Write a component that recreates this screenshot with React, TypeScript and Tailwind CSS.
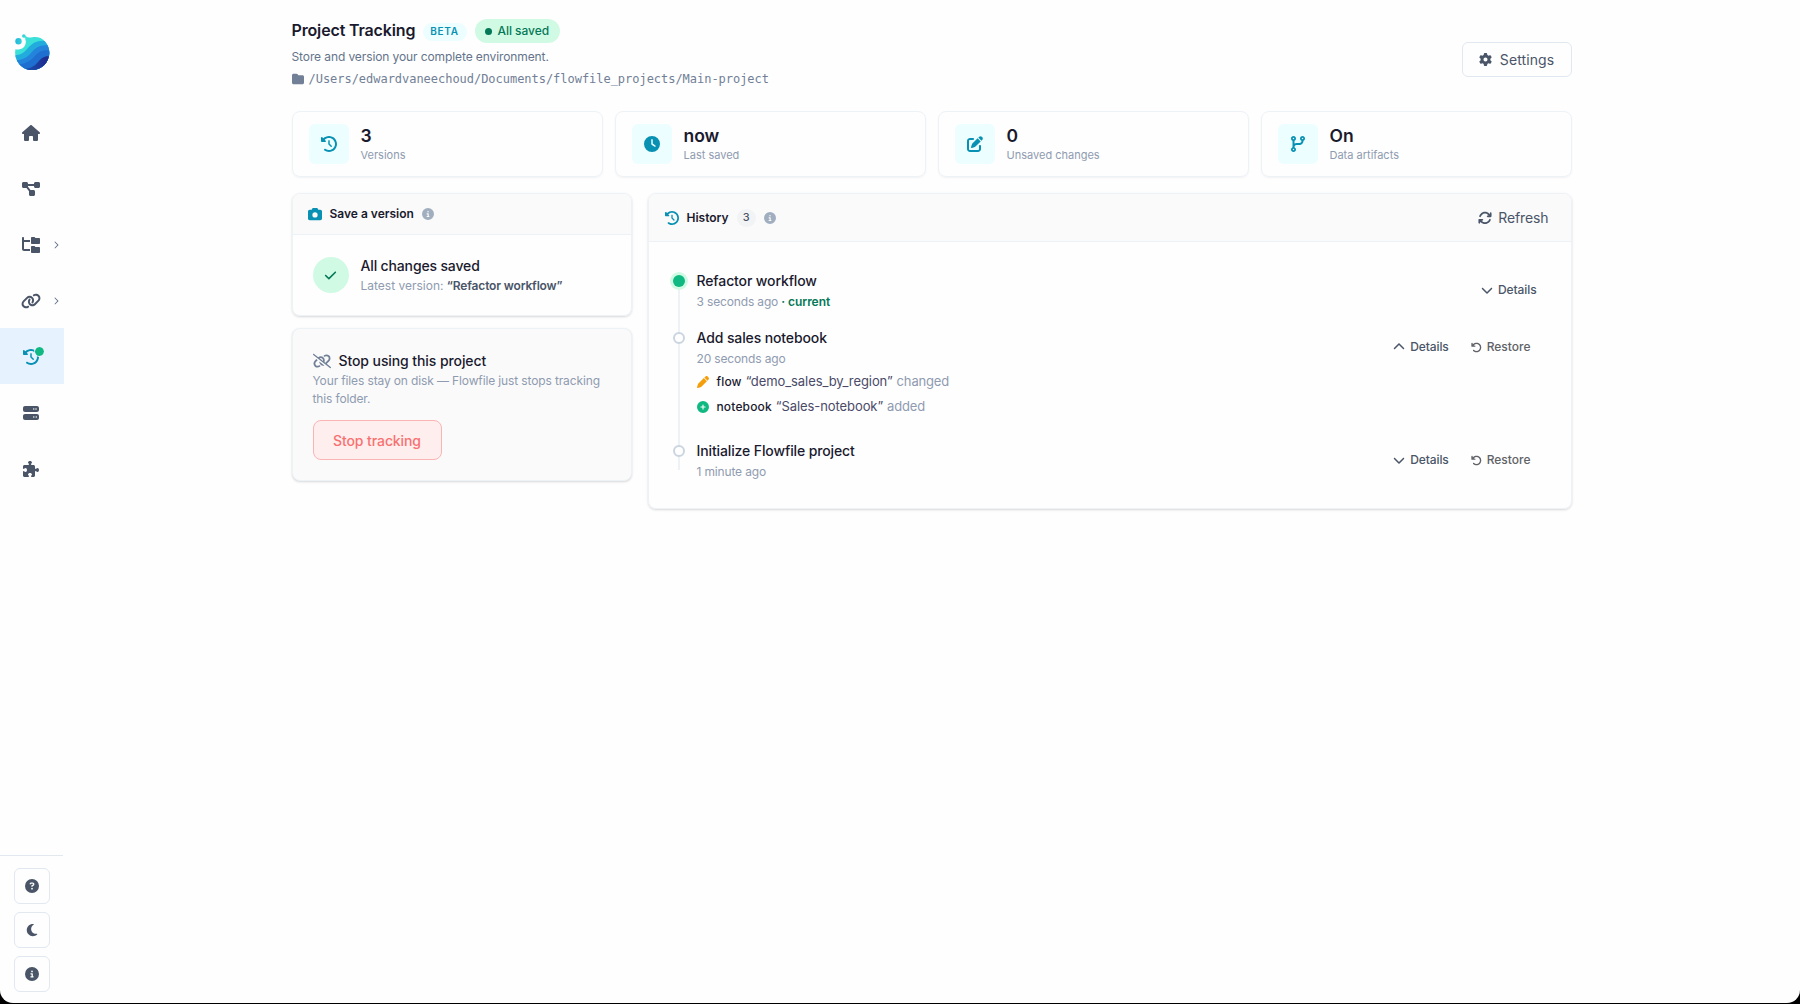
import React from "react";
import type { ReactNode } from "react";
import type { IconType } from "react-icons";
import {
  FaArrowRotateLeft,
  FaArrowsRotate,
  FaCamera,
  FaCheck,
  FaChevronDown,
  FaChevronRight,
  FaChevronUp,
  FaCircleInfo,
  FaCirclePlus,
  FaCircleQuestion,
  FaClock,
  FaClockRotateLeft,
  FaCodeBranch,
  FaDiagramProject,
  FaFolder,
  FaFolderTree,
  FaGear,
  FaHouse,
  FaLink,
  FaLinkSlash,
  FaMoon,
  FaPen,
  FaPenToSquare,
  FaPuzzlePiece,
  FaServer,
} from "react-icons/fa6";

function Logo() {
  return (
    <svg viewBox="0 0 48 48" className="h-12 w-12">
      <defs>
        <clipPath id="globe">
          <path d="M24.5 9.2 C27 8.6 30 9 32.5 10 A17.1 17.1 0 1 1 7.6 21 C8.5 22 13 21.6 15.5 19.4 C18 17 18.6 12.5 16.8 10.6 C19.5 9.4 22 9.5 24.5 9.2Z" />
        </clipPath>
        <linearGradient id="deep" x1="0" x2="1">
          <stop offset="0" stopColor="#1769c4" />
          <stop offset="0.7" stopColor="#1e2f92" />
          <stop offset="1" stopColor="#1e2a8a" />
        </linearGradient>
        <linearGradient id="drop" x1="0" x2="1">
          <stop offset="0" stopColor="#22b8dc" />
          <stop offset="1" stopColor="#35cfd9" />
        </linearGradient>
      </defs>
      <g clipPath="url(#globe)">
        <rect width="48" height="48" fill="#3be0d8" />
        <path d="M0 26 C10 29 15 26 20 20 C25 14 32 10 48 15 V48 H0Z" fill="#22acdd" />
        <path d="M0 31 C10 34 18 31 23 25 C29 18 34 15 48 19 V48 H0Z" fill="#2484dc" />
        <path d="M0 36 C13 38 20 35 26 29 C31 23 36 20 48 24 V48 H0Z" fill="#1f6fd0" />
        <path d="M8 40 C19 42 25 40 30 34 C34 29 38 26 48 30 V48 H8Z" fill="url(#deep)" />
      </g>
      <circle cx="10.5" cy="13.3" r="3.2" fill="url(#drop)" />
      <circle cx="15.8" cy="8" r="1.8" fill="#38d5d8" />
      <path d="M16.5 8.5 L20.5 10.8" stroke="#3be0d8" strokeWidth="1.6" />
    </svg>
  );
}

type NavEntry = { icon: IconType; size: string; expandable?: boolean; active?: boolean };

const NAV: NavEntry[] = [
  { icon: FaHouse, size: "text-[18px]" },
  { icon: FaDiagramProject, size: "text-[18px]" },
  { icon: FaFolderTree, size: "text-[18px]", expandable: true },
  { icon: FaLink, size: "text-[20px]", expandable: true },
  { icon: FaClockRotateLeft, size: "text-[16px]", active: true },
  { icon: FaServer, size: "text-[16px]" },
  { icon: FaPuzzlePiece, size: "text-[16px]" },
];

function Sidebar() {
  return (
    <aside className="flex w-16 shrink-0 flex-col text-[#4a5568]">
      <div className="flex h-[104px] pl-2 pt-7">
        <Logo />
      </div>
      <nav className="flex flex-col">
        {NAV.map(({ icon: Icon, size, expandable, active }, i) => (
          <div
            key={i}
            className={`relative flex h-14 items-center justify-center pr-0.5 pt-px ${size} ${
              active ? "bg-[#e6f3ff] text-[#0891b2]" : ""
            }`}
          >
            <Icon />
            {expandable && (
              <FaChevronRight className="absolute right-[4px] text-[8px] text-[#64748b]" />
            )}
            {active && (
              <span className="absolute left-[35px] top-[19px] h-[9px] w-[9px] rounded-full bg-[#10b981] outline-1 outline-[#e6f3ff]" />
            )}
          </div>
        ))}
      </nav>
      <div className="mt-auto mr-px flex flex-col items-center gap-2 border-t border-[#e2e8f0] pb-[11px] pl-px pt-3">
        {[FaCircleQuestion, FaMoon, FaCircleInfo].map((Icon, i) => (
          <button
            key={i}
            className="flex h-9 w-9 items-center justify-center rounded-md border border-[#e2e8f0] text-[14px]"
          >
            <Icon />
          </button>
        ))}
      </div>
    </aside>
  );
}

function Header() {
  return (
    <header className="flex h-[92px] justify-between">
      <div className="flex flex-col">
        <div className="flex h-6 items-center">
          <h1 className="mr-2 w-[123px] whitespace-nowrap pb-[3px] text-[16px] font-semibold leading-6 tracking-[-0.15px]">
            Project Tracking
          </h1>
          <span className="mr-2 mt-px flex h-[18px] w-11 items-center justify-center rounded-full bg-[#ecfeff] text-[10px] font-semibold tracking-[0.7px] text-[#0891b2]">
            BETA
          </span>
          <span className="flex h-6 w-[85px] items-center gap-[6px] rounded-full bg-[#d1fae5] pl-[10px] text-[12px] font-medium tracking-[-0.05px] text-[#047857]">
            <i className="h-[7px] w-[7px] rounded-full bg-[#047857]" />
            All saved
          </span>
        </div>
        <p className="mt-[5px] text-[12px] leading-[18px] tracking-[-0.1px] text-[#64748b]">
          Store and version your complete environment.
        </p>
        <p className="mt-1 flex items-center gap-[5px] font-['DejaVu_Sans_Mono',monospace] text-[12px] leading-[18px] tracking-[-0.03px] text-[#718096]">
          <FaFolder className="text-[12px]" />
          /Users/edwardvaneechoud/Documents/flowfile_projects/Main-project
        </p>
      </div>
      <button className="mt-[23px] flex h-[35px] w-[110px] items-center justify-center gap-2 rounded-md border border-[#e2e8f0] text-[14px] text-[#4a5568]">
        <FaGear className="text-[13px]" />
        <span className="tracking-[0.1px]">Settings</span>
      </button>
    </header>
  );
}

function Stat({ icon: Icon, value, label }: { icon: IconType; value: string; label: string }) {
  return (
    <div className="flex h-[66px] items-center gap-3 rounded-lg border border-[#edf2f7] pl-4 shadow-[0_1px_2px_rgba(0,0,0,0.05)]">
      <div className="flex h-10 w-10 items-center justify-center rounded-md bg-[#ecfeff] text-[16px] text-[#0891b2]">
        <Icon />
      </div>
      <div>
        <div className="text-[17.5px] font-semibold leading-[22px]">{value}</div>
        <div className="text-[11px] leading-[17px] text-[#8f9bb0]">{label}</div>
      </div>
    </div>
  );
}

function Card({ className, children }: { className: string; children: ReactNode }) {
  return (
    <section
      className={`overflow-hidden rounded-lg border border-[#edf2f7] shadow-[0_1px_3px_rgba(0,0,0,0.1),0_1px_2px_rgba(0,0,0,0.06)] ${className}`}
    >
      {children}
    </section>
  );
}

function SaveCard() {
  return (
    <Card className="h-[123px]">
      <div className="flex h-[41px] items-center border-b border-[#edf2f7] bg-[#fafafa] pl-[15px]">
        <FaCamera className="text-[14px] text-[#0891b2]" />
        <h2 className="ml-2 text-[12px] font-semibold">Save a version</h2>
        <FaCircleInfo className="ml-2 text-[12px] text-[#a0aec0]" />
      </div>
      <div className="flex h-20 items-center gap-3 pl-5">
        <div className="flex h-9 w-9 items-center justify-center rounded-full bg-[#d1fae5] text-[13px] text-[#047857]">
          <FaCheck />
        </div>
        <div className="pt-px">
          <div className="text-[14px] font-medium leading-[21px] tracking-[-0.15px]">
            All changes saved
          </div>
          <div className="text-[12px] leading-5 text-[#8f9bb0]">
            Latest version:{" "}
            <b className="font-semibold tracking-[-0.15px] text-[#4a5568]">“Refactor workflow”</b>
          </div>
        </div>
      </div>
    </Card>
  );
}

function StopCard() {
  return (
    <Card className="h-[153px] bg-[#fafafa] px-5 pt-[21px]">
      <h2 className="flex items-center gap-2 text-[14px] font-medium leading-[21px] tracking-[-0.09px]">
        <FaLinkSlash className="text-[18px] text-[#718096]" />
        Stop using this project
      </h2>
      <p className="mt-px w-[296px] text-[12px] leading-[18px] tracking-[-0.13px] text-[#8f9bb0]">
        Your files stay on disk — Flowfile just stops tracking
        <br />
        this folder.
      </p>
      <button className="mt-3 h-10 w-[129px] rounded-lg border border-[#fbb4b4] bg-[#ffeeee] text-[14px] font-medium tracking-[-0.09px] text-[#f87171]">
        Stop tracking
      </button>
    </Card>
  );
}

function Actions({ open, restore }: { open?: boolean; restore?: boolean }) {
  const Chevron = open ? FaChevronUp : FaChevronDown;
  return (
    <div
      className={`mt-[6px] flex h-7 items-center text-[12px] font-medium ${restore ? "pr-10" : "pr-[34px]"}`}
    >
      <Chevron className="mr-[5px] text-[12px] text-[#4a5568]" />
      <span className="tracking-[-0.1px] text-[#4a5568]">Details</span>
      {restore && (
        <>
          <FaArrowRotateLeft className="ml-[22px] mr-[5px] text-[11px] text-[#606266]" />
          <span className="text-[#606266]">Restore</span>
        </>
      )}
    </div>
  );
}

type EntryProps = {
  title: string;
  time: string;
  current?: boolean;
  open?: boolean;
  height: string;
  line: string;
  children?: ReactNode;
};

function Entry({ title, time, current, open, height, line, children }: EntryProps) {
  return (
    <li className={`relative flex ${height}`}>
      <span className={`absolute left-[29px] top-[11px] w-0.5 bg-[#edf2f7] ${line}`} />
      <span
        className={`relative mt-[5px] ml-6 h-3 w-3 rounded-full ${
          current
            ? "bg-[#10b981] ring-3 ring-[#d1fae5]"
            : "border-2 border-[#cbd5e0] bg-white"
        }`}
      />
      <div className="ml-3 flex-1">
        <div className="text-[14px] font-medium leading-[21px] tracking-[-0.12px]">{title}</div>
        <div className="mt-px text-[12px] leading-5 tracking-[-0.15px] text-[#8f9bb0]">
          {time}
          {current && (
            <b className="font-semibold tracking-[-0.02px] text-[#047857]"> · current</b>
          )}
        </div>
        {children}
      </div>
      <Actions open={open} restore={!current} />
    </li>
  );
}

function Change({ icon, kind, name, verb }: { icon: ReactNode; kind: string; name: string; verb: string }) {
  return (
    <div className="flex h-[25px] items-center text-[13px] text-[#4a4a68]">
      {icon}
      <b className="ml-2 mr-1 text-[12px] font-medium tracking-[0.15px] text-[#1a1a2e]">{kind}</b>
      <span className="mr-1 tracking-[-0.08px]">{name}</span>
      <span className="tracking-[-0.16px] text-[#8f9bb0]">{verb}</span>
    </div>
  );
}

function HistoryCard() {
  return (
    <Card className="h-[316px] flex-1">
      <div className="flex h-12 items-center border-b border-[#edf2f7] bg-[#fafafa] pl-4 pr-[22px]">
        <FaClockRotateLeft className="text-[14px] text-[#0891b2]" />
        <h2 className="ml-2 text-[12px] font-semibold">History</h2>
        <span className="ml-2 flex h-[18px] w-[19px] items-center justify-center rounded-full bg-[#f1f3f5] text-[11px] font-medium text-[#4a5568]">
          3
        </span>
        <FaCircleInfo className="ml-2 text-[12px] text-[#a0aec0]" />
        <button className="ml-auto flex items-center gap-[6px] text-[14px] tracking-[-0.1px] text-[#4a5568]">
          <FaArrowsRotate className="text-[14px]" />
          Refresh
        </button>
      </div>
      <ul className="pt-7">
        <Entry title="Refactor workflow" time="3 seconds ago" current height="h-[57px]" line="h-[57px]" />
        <Entry title="Add sales notebook" time="20 seconds ago" open height="h-[113px]" line="h-[113px]">
          <Change
            icon={<FaPen className="text-[12px] text-[#f59e0b]" />}
            kind="flow"
            name="“demo_sales_by_region”"
            verb="changed"
          />
          <Change
            icon={<FaCirclePlus className="text-[12px] text-[#10b981]" />}
            kind="notebook"
            name="“Sales-notebook”"
            verb="added"
          />
        </Entry>
        <Entry title="Initialize Flowfile project" time="1 minute ago" height="h-[41px]" line="h-[19px]" />
      </ul>
    </Card>
  );
}

export default function App() {
  return (
    <div className="h-[1004px] w-[1800px] overflow-hidden bg-black font-[Inter,sans-serif] text-[#1a1a2e]">
      <div className="flex h-[1003px] rounded-b-[13px] bg-[#fefefe]">
        <Sidebar />
        <main className="flex flex-1 justify-center pr-px">
          <div className="w-[1280px] pt-[19px]">
            <Header />
            <div className="grid grid-cols-4 gap-3">
              <Stat icon={FaClockRotateLeft} value="3" label="Versions" />
              <Stat icon={FaClock} value="now" label="Last saved" />
              <Stat icon={FaPenToSquare} value="0" label="Unsaved changes" />
              <Stat icon={FaCodeBranch} value="On" label="Data artifacts" />
            </div>
            <div className="mt-4 flex items-start gap-4">
              <div className="flex w-[340px] flex-col gap-3">
                <SaveCard />
                <StopCard />
              </div>
              <HistoryCard />
            </div>
          </div>
        </main>
      </div>
    </div>
  );
}
